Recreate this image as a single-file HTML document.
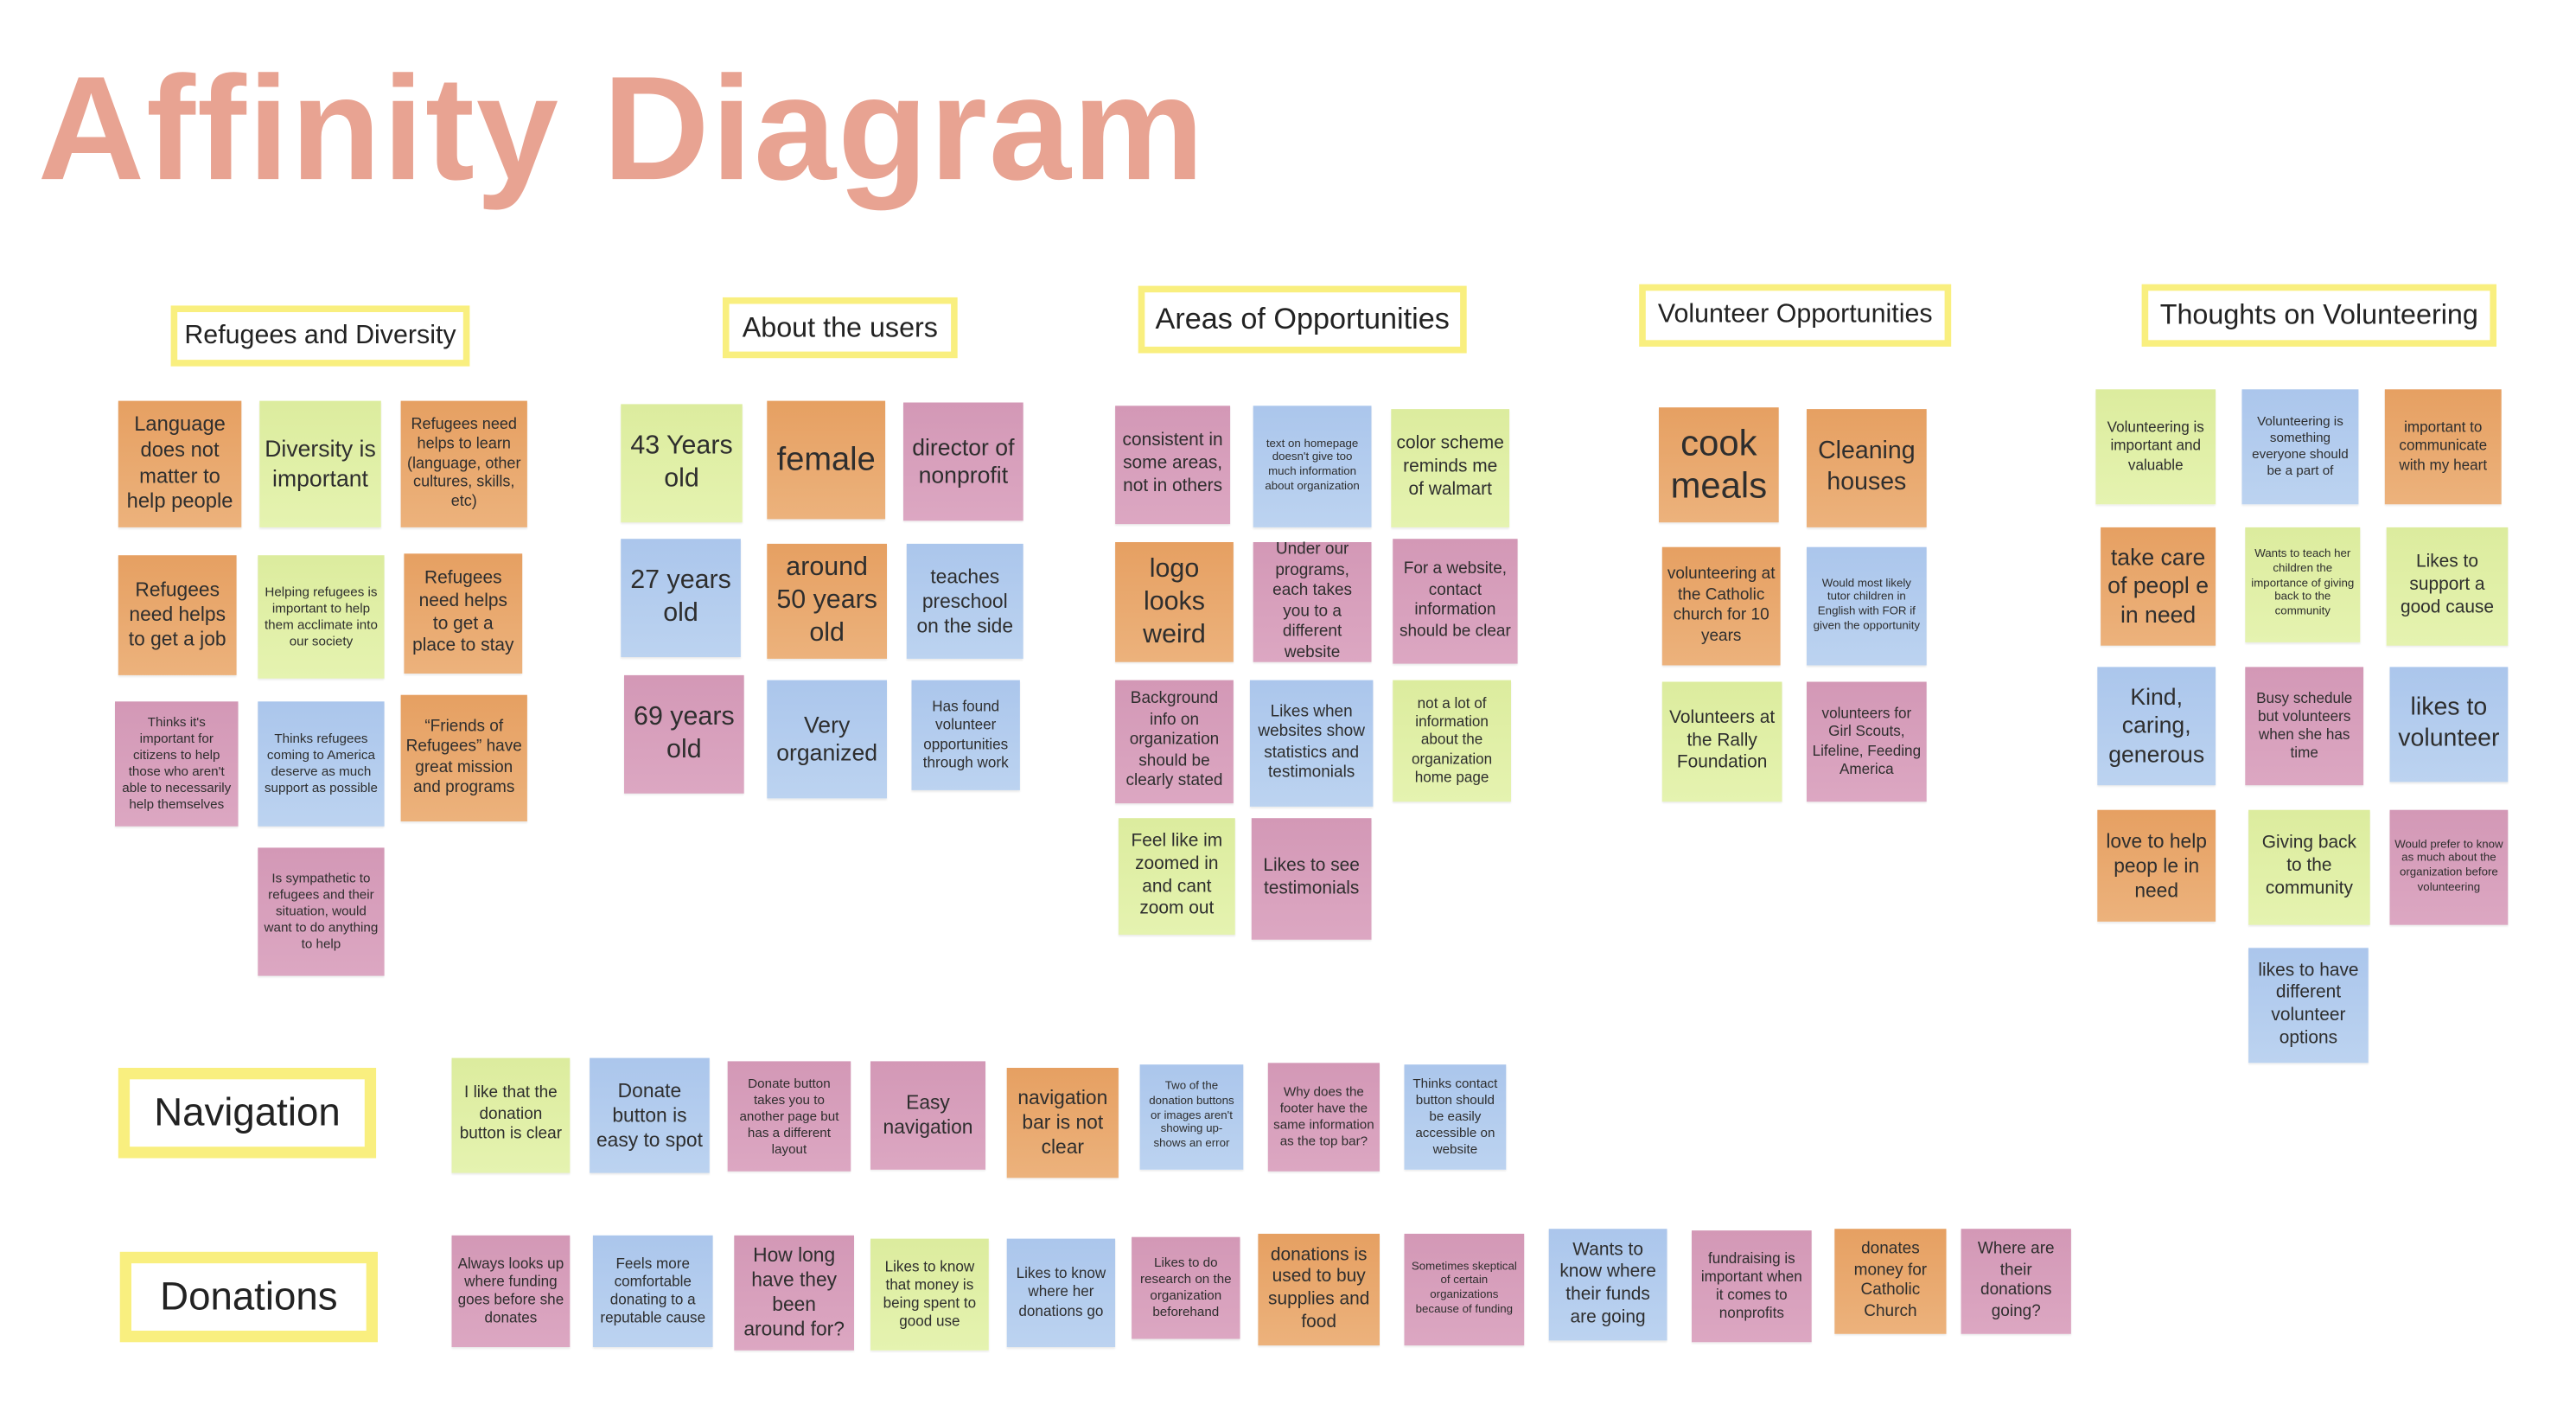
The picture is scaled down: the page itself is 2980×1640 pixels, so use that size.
<!DOCTYPE html>
<html><head><meta charset="utf-8"><style>
html,body{margin:0;padding:0;background:#fff;}
body{width:2980px;height:1640px;overflow:hidden;position:relative;}
#c{position:absolute;left:0;top:0;width:1570px;height:863px;transform:scale(1.900);transform-origin:0 0;font-family:"Liberation Sans",sans-serif;color:#2e2e2e;}
h1{position:absolute;left:23px;top:34px;margin:0;font-size:90px;font-weight:bold;color:#e8a392;letter-spacing:1px;line-height:1;}
.n{position:absolute;display:flex;align-items:center;justify-content:center;text-align:center;line-height:1.25;padding:3px;box-sizing:border-box;box-shadow:0 1px 1px rgba(0,0,0,.08);}
.o{background:linear-gradient(#e6a062,#ecb27c);}
.g{background:linear-gradient(#dcec9e,#e5f3b0);}
.b{background:linear-gradient(#abc6ec,#bcd3f0);}
.p{background:linear-gradient(#d398b6,#dca7c2);}
.h{position:absolute;border:4px solid #f9ef7f;background:#fff;display:flex;align-items:center;justify-content:center;box-sizing:border-box;color:#222;white-space:nowrap;}
.h2{border-width:7px;}
</style></head><body><div id="c">
<h1>Affinity Diagram</h1>

<div class="h" style="left:104px;top:186px;width:182px;height:37px;font-size:16px">Refugees and Diversity</div>
<div class="n o" style="left:72px;top:244px;width:75px;height:77px;font-size:12.5px">Language does not matter to help people</div>
<div class="n g" style="left:158px;top:244px;width:74px;height:77px;font-size:14px">Diversity is important</div>
<div class="n o" style="left:244px;top:244px;width:77px;height:77px;font-size:9.5px">Refugees need helps to learn (language, other cultures, skills, etc)</div>
<div class="n o" style="left:72px;top:338px;width:72px;height:73px;font-size:12px">Refugees need helps to get a job</div>
<div class="n g" style="left:157px;top:338px;width:77px;height:75px;font-size:8px">Helping refugees is important to help them acclimate into our society</div>
<div class="n o" style="left:246px;top:337px;width:72px;height:73px;font-size:11px">Refugees need helps to get a place to stay</div>
<div class="n p" style="left:70px;top:427px;width:75px;height:76px;font-size:8px">Thinks it's important for citizens to help those who aren't able to necessarily help themselves</div>
<div class="n b" style="left:157px;top:427px;width:77px;height:76px;font-size:8px">Thinks refugees coming to America deserve as much support as possible</div>
<div class="n o" style="left:244px;top:423px;width:77px;height:77px;font-size:10px">“Friends of Refugees” have great mission and programs</div>
<div class="n p" style="left:157px;top:516px;width:77px;height:78px;font-size:8px">Is sympathetic to refugees and their situation, would want to do anything to help</div>

<div class="h" style="left:440px;top:181px;width:143px;height:37px;font-size:17px">About the users</div>
<div class="n g" style="left:378px;top:246px;width:74px;height:72px;font-size:16px">43 Years old</div>
<div class="n o" style="left:467px;top:244px;width:72px;height:72px;font-size:20px">female</div>
<div class="n p" style="left:550px;top:245px;width:73px;height:72px;font-size:14px">director of nonprofit</div>
<div class="n b" style="left:378px;top:328px;width:73px;height:72px;font-size:16px">27 years old</div>
<div class="n o" style="left:467px;top:331px;width:73px;height:70px;font-size:16px">around 50 years old</div>
<div class="n b" style="left:552px;top:331px;width:71px;height:70px;font-size:12px">teaches preschool on the side</div>
<div class="n p" style="left:380px;top:411px;width:73px;height:72px;font-size:16px">69 years old</div>
<div class="n b" style="left:467px;top:414px;width:73px;height:72px;font-size:14px">Very organized</div>
<div class="n b" style="left:555px;top:414px;width:66px;height:67px;font-size:9px">Has found volunteer opportunities through work</div>

<div class="h" style="left:693px;top:174px;width:200px;height:41px;font-size:18px">Areas of Opportunities</div>
<div class="n p" style="left:679px;top:247px;width:70px;height:72px;font-size:11px">consistent in some areas, not in others</div>
<div class="n b" style="left:763px;top:247px;width:72px;height:74px;font-size:7px">text on homepage doesn't give too much information about organization</div>
<div class="n g" style="left:847px;top:249px;width:72px;height:72px;font-size:11px">color scheme reminds me of walmart</div>
<div class="n o" style="left:679px;top:330px;width:72px;height:73px;font-size:16px">logo looks weird</div>
<div class="n p" style="left:763px;top:330px;width:72px;height:73px;font-size:10px">Under our programs, each takes you to a different website</div>
<div class="n p" style="left:848px;top:328px;width:76px;height:76px;font-size:10px">For a website, contact information should be clear</div>
<div class="n p" style="left:679px;top:414px;width:72px;height:75px;font-size:10px">Background info on organization should be clearly stated</div>
<div class="n b" style="left:761px;top:414px;width:75px;height:77px;font-size:10px">Likes when websites show statistics and testimonials</div>
<div class="n g" style="left:848px;top:414px;width:72px;height:74px;font-size:9px">not a lot of information about the organization home page</div>
<div class="n g" style="left:681px;top:498px;width:71px;height:71px;font-size:11px">Feel like im zoomed in and cant zoom out</div>
<div class="n p" style="left:762px;top:498px;width:73px;height:74px;font-size:11px">Likes to see testimonials</div>

<div class="h" style="left:998px;top:173px;width:190px;height:38px;font-size:16px">Volunteer Opportunities</div>
<div class="n o" style="left:1010px;top:248px;width:73px;height:70px;font-size:22px;line-height:1.2">cook meals</div>
<div class="n o" style="left:1100px;top:249px;width:73px;height:72px;font-size:15px">Cleaning houses</div>
<div class="n o" style="left:1012px;top:333px;width:72px;height:72px;font-size:10px">volunteering at the Catholic church for 10 years</div>
<div class="n b" style="left:1100px;top:333px;width:73px;height:72px;font-size:7px">Would most likely tutor children in English with FOR if given the opportunity</div>
<div class="n g" style="left:1012px;top:415px;width:73px;height:73px;font-size:11px">Volunteers at the Rally Foundation</div>
<div class="n p" style="left:1100px;top:415px;width:73px;height:73px;font-size:9px">volunteers for Girl Scouts, Lifeline, Feeding America</div>

<div class="h" style="left:1304px;top:173px;width:216px;height:38px;font-size:17px">Thoughts on Volunteering</div>
<div class="n g" style="left:1276px;top:237px;width:73px;height:70px;font-size:9px">Volunteering is important and valuable</div>
<div class="n b" style="left:1365px;top:237px;width:71px;height:70px;font-size:8px">Volunteering is something everyone should be a part of</div>
<div class="n o" style="left:1452px;top:237px;width:71px;height:70px;font-size:9px">important to communicate with my heart</div>
<div class="n o" style="left:1279px;top:321px;width:70px;height:72px;font-size:14px">take care of peopl e in need</div>
<div class="n g" style="left:1367px;top:321px;width:70px;height:70px;font-size:7px">Wants to teach her children the importance of giving back to the community</div>
<div class="n g" style="left:1453px;top:321px;width:74px;height:72px;font-size:11px">Likes to support a good cause</div>
<div class="n b" style="left:1277px;top:406px;width:72px;height:72px;font-size:14px">Kind, caring, generous</div>
<div class="n p" style="left:1367px;top:406px;width:72px;height:72px;font-size:9px">Busy schedule but volunteers when she has time</div>
<div class="n b" style="left:1455px;top:406px;width:72px;height:70px;font-size:15px">likes to volunteer</div>
<div class="n o" style="left:1277px;top:493px;width:72px;height:68px;font-size:12px">love to help peop le in need</div>
<div class="n g" style="left:1369px;top:493px;width:74px;height:70px;font-size:11px">Giving back to the community</div>
<div class="n p" style="left:1455px;top:493px;width:72px;height:70px;font-size:7px">Would prefer to know as much about the organization before volunteering</div>
<div class="n b" style="left:1369px;top:577px;width:73px;height:70px;font-size:11px">likes to have different volunteer options</div>

<div class="h h2" style="left:72px;top:650px;width:157px;height:55px;font-size:24px">Navigation</div>
<div class="n g" style="left:275px;top:644px;width:72px;height:70px;font-size:10px">I like that the donation button is clear</div>
<div class="n b" style="left:359px;top:644px;width:73px;height:70px;font-size:12px">Donate button is easy to spot</div>
<div class="n p" style="left:443px;top:646px;width:75px;height:67px;font-size:8px">Donate button takes you to another page but has a different layout</div>
<div class="n p" style="left:530px;top:646px;width:70px;height:66px;font-size:12px">Easy navigation</div>
<div class="n o" style="left:613px;top:650px;width:68px;height:67px;font-size:12px">navigation bar is not clear</div>
<div class="n b" style="left:694px;top:648px;width:63px;height:64px;font-size:7px">Two of the donation buttons or images aren't showing up- shows an error</div>
<div class="n p" style="left:772px;top:647px;width:68px;height:66px;font-size:8px">Why does the footer have the same information as the top bar?</div>
<div class="n b" style="left:855px;top:648px;width:62px;height:64px;font-size:8px">Thinks contact button should be easily accessible on website</div>

<div class="h h2" style="left:73px;top:762px;width:157px;height:55px;font-size:24px">Donations</div>
<div class="n p" style="left:275px;top:752px;width:72px;height:68px;font-size:9px">Always looks up where funding goes before she donates</div>
<div class="n b" style="left:361px;top:752px;width:73px;height:68px;font-size:9px">Feels more comfortable donating to a reputable cause</div>
<div class="n p" style="left:447px;top:752px;width:73px;height:70px;font-size:12px">How long have they been around for?</div>
<div class="n g" style="left:530px;top:754px;width:72px;height:68px;font-size:9px">Likes to know that money is being spent to good use</div>
<div class="n b" style="left:613px;top:754px;width:66px;height:66px;font-size:9px">Likes to know where her donations go</div>
<div class="n p" style="left:689px;top:753px;width:66px;height:62px;font-size:8px">Likes to do research on the organization beforehand</div>
<div class="n o" style="left:766px;top:751px;width:74px;height:68px;font-size:11px">donations is used to buy supplies and food</div>
<div class="n p" style="left:855px;top:751px;width:73px;height:68px;font-size:7px">Sometimes skeptical of certain organizations because of funding</div>
<div class="n b" style="left:943px;top:748px;width:72px;height:68px;font-size:11px">Wants to know where their funds are going</div>
<div class="n p" style="left:1030px;top:749px;width:73px;height:68px;font-size:9px">fundraising is important when it comes to nonprofits</div>
<div class="n o" style="left:1117px;top:748px;width:68px;height:64px;font-size:10px">donates money for Catholic Church</div>
<div class="n p" style="left:1194px;top:748px;width:67px;height:64px;font-size:10px">Where are their donations going?</div>
</div></body></html>
